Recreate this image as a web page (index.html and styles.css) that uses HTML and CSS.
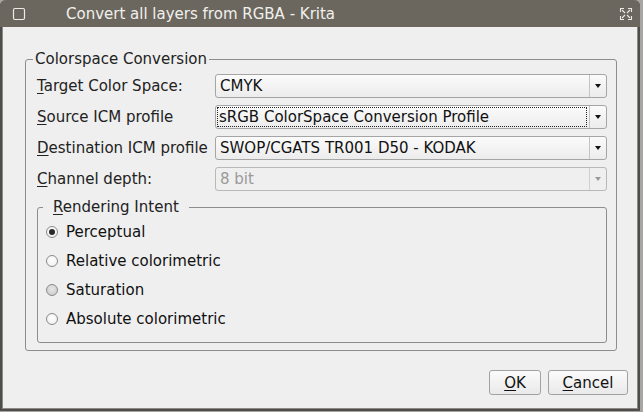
FILE: index.html
```html
<!DOCTYPE html>
<html>
<head>
<meta charset="utf-8">
<link rel="stylesheet" href="styles.css">
</head>
<body>
<div class="window">
  <div class="titlebar">
    <svg class="tb-icon" width="14" height="14" viewBox="0 0 14 14"><rect x="1.5" y="1.5" width="11" height="11" rx="1.5" fill="none" stroke="#ecebe6" stroke-width="1.2"/></svg>
    <span class="title">Convert all layers from RGBA - Krita</span>
    <svg class="tb-max" width="14" height="14" viewBox="0 0 14 14" fill="none" stroke="#ecebe6" stroke-width="1.1">
      <path d="M1.5 5V1.5H5M9 1.5h3.5V5M12.5 9v3.5H9M5 12.5H1.5V9"/>
      <path d="M3 3l3 3M11 3l-3 3M11 11l-3-3M3 11l3-3"/>
    </svg>
  </div>
  <div class="content">
    <fieldset class="group outer">
      <legend>Colorspace Conversion</legend>
      <div class="rows">
        <div class="row">
          <span class="label"><u>T</u>arget Color Space:</span>
          <div class="combo"><span class="val">CMYK</span><span class="arrow"><i></i></span></div>
        </div>
        <div class="row">
          <span class="label"><u>S</u>ource ICM profile</span>
          <div class="combo"><span class="val focus">sRGB ColorSpace Conversion Profile</span><span class="arrow"><i></i></span></div>
        </div>
        <div class="row">
          <span class="label"><u>D</u>estination ICM profile</span>
          <div class="combo"><span class="val">SWOP/CGATS TR001 D50 - KODAK</span><span class="arrow"><i></i></span></div>
        </div>
        <div class="row disabled">
          <span class="label"><u>C</u>hannel depth:</span>
          <div class="combo"><span class="val">8 bit</span><span class="arrow"><i></i></span></div>
        </div>
      </div>
      <fieldset class="group inner">
        <legend><u>R</u>endering Intent</legend>
        <div class="radios">
          <div class="radio"><span class="dot checked"></span>Perceptual</div>
          <div class="radio"><span class="dot"></span>Relative colorimetric</div>
          <div class="radio"><span class="dot hover"></span>Saturation</div>
          <div class="radio"><span class="dot"></span>Absolute colorimetric</div>
        </div>
      </fieldset>
    </fieldset>
    <div class="buttons">
      <button class="btn ok"><u>O</u>K</button>
      <button class="btn cancel"><u>C</u>ancel</button>
    </div>
  </div>
</div>
</body>
</html>
```
FILE: styles.css
```css
html, body {
  margin: 0;
  padding: 0;
}
body {
  background: #a8a6a2;
  width: 643px;
  height: 412px;
  font-family: "DejaVu Sans", sans-serif;
  font-size: 15px;
  color: #1a1a1a;
}
.window {
  width: 640px;
  height: 411px;
  box-sizing: border-box;
  background: #efefef;
  border-left: 2px solid #4f4d49;
  border-right: 2px solid #4f4d49;
  border-bottom: 2px solid #4f4d49;
  border-radius: 6px 6px 0 0;
  display: flex;
  flex-direction: column;
  box-shadow: inset 1px 0 0 #8c8a85, inset -1px 0 0 #8c8a85, inset 0 -1px 0 #8c8a85;
}
.titlebar {
  height: 27px;
  flex: none;
  background: #6b675f;
  border-radius: 6px 6px 0 0;
  display: flex;
  align-items: center;
  color: #f1f0ec;
  margin: 0 -2px;
  padding: 0 0 0 12px;
}
.tb-icon {
  flex: none;
}
.title {
  margin-left: 40px;
  font-size: 15px;
  flex: 1;
}
.tb-max {
  margin-right: 7px;
}
.content {
  flex: 1;
  display: flex;
  flex-direction: column;
  padding: 23px 21px 0 23px;
}
fieldset.group {
  margin: 0;
  border: 1px solid #8d8d8d;
  border-radius: 3px;
  min-width: 0;
}
fieldset.outer {
  padding: 6px 9px 7px 11px;
}
.outer > legend {
  margin-left: -4px;
  padding: 0 2px;
  line-height: 18px;
  color: #222;
}
.rows {
  display: flex;
  flex-direction: column;
  gap: 7px;
}
.row {
  display: flex;
  align-items: center;
  height: 24px;
}
.label {
  width: 178px;
  flex: none;
  color: #222;
}
.combo {
  flex: 1;
  height: 24px;
  box-sizing: border-box;
  border: 1px solid #a5a5a5;
  border-radius: 3px;
  background: linear-gradient(#fbfbfb, #ececec);
  display: flex;
  align-items: stretch;
}
.val {
  flex: 1;
  display: flex;
  align-items: center;
  padding-left: 4px;
  color: #111;
  white-space: nowrap;
}
.val.focus {
  margin: 1px 2px 1px 1px;
  padding-left: 2px;
  outline: 1px dotted #222;
  outline-offset: -1px;
}
.arrow {
  width: 16px;
  border-left: 1px solid #c4c4c4;
  display: flex;
  align-items: center;
  justify-content: center;
}
.arrow i {
  width: 0;
  height: 0;
  border-left: 3.5px solid transparent;
  border-right: 3.5px solid transparent;
  border-top: 4px solid #111;
}
.disabled .combo {
  background: #efefef;
  border-color: #b8b8b8;
}
.disabled .val {
  color: #9a9a9a;
}
.disabled .arrow i {
  border-top-color: #9a9a9a;
}
.disabled .arrow {
  border-left-color: #d0d0d0;
}
fieldset.inner {
  margin-top: 7px;
  padding: 7px 10px 14px 8px;
}
.inner > legend {
  margin-left: -3px;
  padding: 0 10px;
  line-height: 18px;
  color: #222;
}
.radios {
  display: flex;
  flex-direction: column;
  gap: 11px;
}
.radio {
  display: flex;
  align-items: center;
  height: 18px;
  color: #111;
}
.dot {
  width: 12px;
  height: 12px;
  box-sizing: border-box;
  border: 1px solid #8a8a8a;
  border-radius: 50%;
  background: radial-gradient(circle at 50% 40%, #ffffff, #ececec);
  margin-right: 8px;
  display: flex;
  align-items: center;
  justify-content: center;
}
.dot.checked::after {
  content: "";
  width: 6px;
  height: 6px;
  border-radius: 50%;
  background: #2a2a2a;
}
.dot.hover {
  background: radial-gradient(circle at 50% 40%, #e6e6e6, #c9c9c9);
}
.buttons {
  display: flex;
  justify-content: flex-end;
  gap: 7px;
  margin-top: 19px;
  margin-right: -11px;
}
.btn {
  font-family: "DejaVu Sans", sans-serif;
  font-size: 15px;
  color: #111;
  height: 25px;
  box-sizing: border-box;
  border: 1px solid #a2a2a2;
  border-radius: 3px;
  background: linear-gradient(#fbfbfb, #e9e9e9);
  padding: 0;
}
.ok { width: 52px; }
.cancel { width: 80px; }
u {
  text-decoration-thickness: 1px;
  text-underline-offset: 2px;
}
```
